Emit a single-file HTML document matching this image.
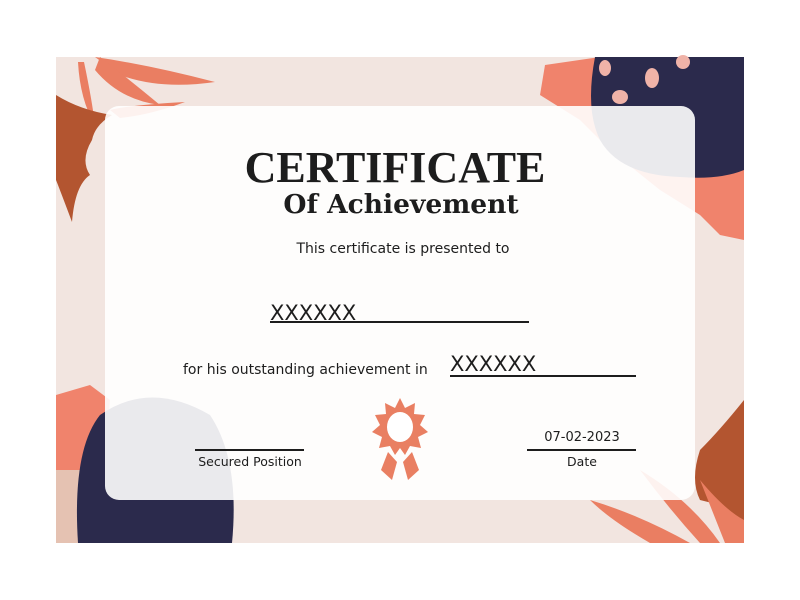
<!DOCTYPE html>
<html><head><style>
html,body{margin:0;padding:0;background:#fff;width:800px;height:600px;overflow:hidden;position:relative;font-family:"DejaVu Sans","Liberation Sans",sans-serif}
.t{position:absolute;white-space:nowrap;color:#1d1d1d}
</style></head><body>
<svg style="position:absolute;left:0;top:0" width="800" height="600">
<rect x="56" y="57" width="688" height="486" fill="#f2e5e0"/>
<path d="M545 65 L600 57 L744 57 L744 240 L720 235 L700 215 L660 190 L610 150 L580 120 L540 95 Z" fill="#f0836c"/>
<path d="M595 57 L744 57 L744 170 Q720 180 680 177 Q620 175 600 140 Q585 110 595 57Z" fill="#2b2a4c"/>
<g fill="#f0b3a8"><ellipse cx="605" cy="68" rx="6" ry="8"/><ellipse cx="652" cy="78" rx="7" ry="10"/><ellipse cx="620" cy="97" rx="8" ry="7"/><ellipse cx="683" cy="62" rx="7" ry="7"/></g>
<g fill="#ea7e62">
<path d="M95 57 Q150 65 215 82 Q160 90 120 75 Z"/>
<path d="M100 57 Q130 80 160 105 Q120 100 95 70Z"/>
<path d="M84 62 Q92 100 95 125 Q80 100 78 62Z"/>
<path d="M110 110 Q130 105 185 102 Q150 115 120 118Z"/>
</g>
<path d="M56 95 Q80 110 112 115 Q95 125 92 140 Q80 160 90 175 Q75 185 72 222 Q60 190 56 180Z" fill="#b35530"/>
<path d="M56 395 L90 385 L110 400 L105 470 L56 480Z" fill="#f0836c"/>
<rect x="56" y="470" width="40" height="73" fill="#e5c2b2"/>
<path d="M78 543 Q72 450 100 415 Q150 380 210 415 Q240 460 232 543Z" fill="#2b2a4c"/>
<path d="M744 400 Q720 430 700 450 Q690 480 700 500 L720 505 L744 530Z" fill="#b35530"/>
<g fill="#ea7e62">
<path d="M590 500 Q640 515 690 543 L650 543 Q610 520 590 500Z"/>
<path d="M640 470 Q690 500 720 543 L700 543 Q670 510 640 470Z"/>
<path d="M700 480 Q725 510 744 520 L744 543 L725 543Z"/>
</g>
<rect x="105" y="106" width="590" height="394" rx="14" fill="#ffffff" fill-opacity="0.9"/>
<g stroke="#1d1d1d" stroke-width="2">
<line x1="270" y1="322" x2="529" y2="322"/>
<line x1="450" y1="376" x2="636" y2="376"/>
<line x1="195" y1="450" x2="304" y2="450"/>
<line x1="527" y1="450" x2="636" y2="450"/>
</g>
<g fill="#e97f62">
<polygon points="400,398 405,408 415,403 414,414 425,415 420,425 428,432 418,437 421,448 410,446 405,455 400,448 395,455 390,446 379,448 382,437 372,432 380,425 375,415 386,414 385,403 395,408"/>
<polygon points="388,452 397,462 392,480 381,470"/>
<polygon points="412,452 403,462 408,480 419,470"/>
</g>
<ellipse cx="400" cy="427" rx="13" ry="15" fill="#fff"/>
</svg>
<div class="t" style="left:0;width:790px;text-align:center;top:142px;font:bold 44px 'Liberation Serif','DejaVu Serif',serif">CERTIFICATE</div>
<div class="t" style="left:0;width:802px;text-align:center;top:189px;font:bold 26.5px 'DejaVu Serif','Liberation Serif',serif">Of Achievement</div>
<div class="t" style="left:0;width:806px;text-align:center;top:241px;font-size:14px">This certificate is presented to</div>
<div class="t" style="left:270px;top:301px;font-size:21px">XXXXXX</div>
<div class="t" style="left:183px;top:362px;font-size:14px">for his outstanding achievement in</div>
<div class="t" style="left:450px;top:352px;font-size:21px">XXXXXX</div>
<div class="t" style="left:195px;width:110px;text-align:center;top:454px;font-size:12.5px">Secured Position</div>
<div class="t" style="left:527px;width:110px;text-align:center;top:430px;font-size:13px">07-02-2023</div>
<div class="t" style="left:527px;width:110px;text-align:center;top:454px;font-size:12.5px">Date</div>
</body></html>
